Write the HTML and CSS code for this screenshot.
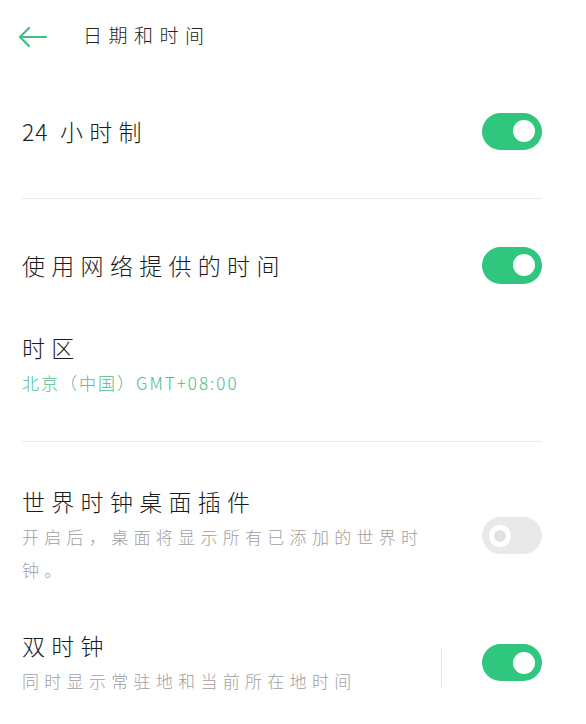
FILE: index.html
```html
<!DOCTYPE html>
<html lang="zh-CN">
<head>
  <meta charset="UTF-8">
  <meta name="viewport" content="width=device-width, initial-scale=1.0">
  <title>日期和时间</title>
  <link rel="stylesheet" href="styles.css">
</head>
<body>
  <div class="header">
    <svg class="back" width="30" height="22" viewBox="0 0 30 22">
      <path d="M2 11 H28 M11 2 L2 11 L11 20" fill="none" stroke="#3cc283" stroke-width="2.2" stroke-linecap="round" stroke-linejoin="round"/>
    </svg>
    <div class="title">日期和时间</div>
  </div>

  <div class="container">
    <div class="row row-first">
      <div class="label"><span class="num">24</span> 小时制</div>
      <div class="switch on"><span class="knob"></span></div>
    </div>
    <div class="divider"></div>

    <div class="row row-net">
      <div class="label">使用网络提供的时间</div>
      <div class="switch on"><span class="knob"></span></div>
    </div>
    <div class="item zone">
      <div class="label">时区</div>
      <div class="sub green">北京（中国）GMT+08:00</div>
    </div>
    <div class="divider"></div>

    <div class="row row-world">
      <div class="text">
        <div class="label">世界时钟桌面插件</div>
        <div class="sub wrap">开启后，桌面将显示所有已添加的世界时钟。</div>
      </div>
      <div class="switch off"><span class="knob"></span></div>
    </div>

    <div class="row row-dual">
      <div class="text">
        <div class="label">双时钟</div>
        <div class="sub">同时显示常驻地和当前所在地时间</div>
      </div>
      <div class="vline"></div>
      <div class="switch on"><span class="knob"></span></div>
    </div>
  </div>
</body>
</html>
```

FILE: styles.css
```css
body {
  margin: 0;
  background: #ffffff;
  font-family: "Noto Sans CJK SC", "Noto Sans", sans-serif;
  font-weight: 300;
  color: #1b1b1b;
}
.header {
  height: 74px;
  display: flex;
  align-items: center;
  padding-left: 18px;
}
.back {
  display: block;
}
.title {
  margin-left: 35px;
  padding-bottom: 5px;
  font-size: 19px;
  letter-spacing: 6.5px;
  color: #222;
}
.container {
  padding: 0 44px 0 22px;
}
.row {
  display: flex;
  align-items: center;
  justify-content: space-between;
}
.label {
  font-size: 23px;
  line-height: 30px;
  letter-spacing: 6.3px;
}
.num {
  letter-spacing: 1px;
}
.sub {
  font-size: 17px;
  line-height: 28px;
  letter-spacing: 5.3px;
  color: #a0a0a0;
  margin-top: 7px;
}
.green {
  color: #4bbd88;
  letter-spacing: 2px;
}
.wrap {
  max-width: 412px;
  line-height: 33px;
  margin-top: 4px;
}
.row-first {
  height: 44px;
  padding: 35px 0 45px;
}
.row-net {
  height: 44px;
  padding-top: 44px;
}
.zone {
  padding: 45px 0 44px;
}
.divider {
  height: 1px;
  background: #e8e8e8;
}
.row-world {
  align-items: flex-start;
  padding-top: 44px;
}
.row-world .switch {
  margin-top: 31px;
}
.row-dual {
  padding-top: 44px;
}
.row-dual .text {
  flex: 1;
}
.vline {
  width: 1px;
  height: 40px;
  background: #e6e6e6;
  margin: 10px 40px 0 0;
}
.switch {
  width: 60px;
  height: 37px;
  border-radius: 18.5px;
  position: relative;
  flex-shrink: 0;
}
.switch.on {
  background: #30c67e;
}
.switch.off {
  background: #e9e9e9;
}
.knob {
  position: absolute;
  top: 7.5px;
  width: 22px;
  height: 22px;
  border-radius: 50%;
  background: #ffffff;
}
.on .knob {
  right: 7px;
}
.off .knob {
  left: 7px;
  width: 12px;
  height: 12px;
  border: 5px solid #ffffff;
  background: #e2e2e2;
}
```
